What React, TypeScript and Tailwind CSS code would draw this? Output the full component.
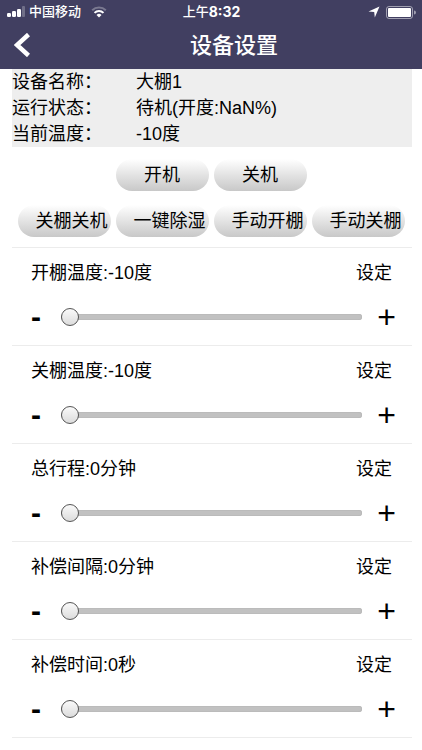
import { useState } from "react";

type Setting = {
    id: string;
    name: string;
    unit: string;
    min: number;
    max: number;
};

const INFO = [
    { label: "设备名称：", value: "大棚1" },
    { label: "运行状态：", value: "待机(开度:NaN%)" },
    { label: "当前温度：", value: "-10度" },
];

const SETTINGS: Setting[] = [
    { id: "open-temp", name: "开棚温度", unit: "度", min: -10, max: 50 },
    { id: "close-temp", name: "关棚温度", unit: "度", min: -10, max: 50 },
    { id: "travel", name: "总行程", unit: "分钟", min: 0, max: 60 },
    { id: "interval", name: "补偿间隔", unit: "分钟", min: 0, max: 60 },
    { id: "duration", name: "补偿时间", unit: "秒", min: 0, max: 60 },
];

const pillCls =
    "h-8 w-[93px] overflow-hidden whitespace-nowrap rounded-full bg-linear-to-b from-white to-[#c8c8c8]";

const rangeCls =
    "h-5 min-w-0 flex-1 appearance-none bg-transparent " +
    "[&::-webkit-slider-runnable-track]:h-1.5 [&::-webkit-slider-runnable-track]:rounded-full [&::-webkit-slider-runnable-track]:bg-[#c1c1c1] [&::-webkit-slider-runnable-track]:shadow-[inset_0_0_1px_#888888] " +
    "[&::-webkit-slider-thumb]:-mt-1.5 [&::-webkit-slider-thumb]:size-[18px] [&::-webkit-slider-thumb]:appearance-none [&::-webkit-slider-thumb]:rounded-full [&::-webkit-slider-thumb]:border [&::-webkit-slider-thumb]:border-[#555555] [&::-webkit-slider-thumb]:bg-linear-to-b [&::-webkit-slider-thumb]:from-[#fafafa] [&::-webkit-slider-thumb]:to-[#dcdcdc]";

function StatusBar() {
    return (
        <div className="grid h-6 grid-cols-3 items-center pr-1.5 pl-[7px] text-[13px] leading-6">
            <div className="flex items-center gap-1">
                <svg className="h-3 w-[18px]" viewBox="0 0 18 12" fill="currentColor" aria-hidden="true">
                    <rect x="0" y="7" width="4" height="4" rx="1.2" />
                    <rect x="5" y="5" width="4" height="6" rx="1.2" />
                    <rect x="10" y="3" width="4" height="8" rx="1.2" />
                    <rect x="15" y="0" width="3" height="11" rx="1" opacity="0.25" />
                </svg>
                <span className="whitespace-nowrap font-medium">中国移动</span>
                <svg className="ml-1.5 h-3 w-4" viewBox="0 0 16 12" fill="none" stroke="currentColor" strokeWidth="2" aria-hidden="true">
                    <path d="M1.2 4.2a9.8 9.8 0 0 1 13.6 0" opacity="0.3" />
                    <path d="M3.5 6.9a6.4 6.4 0 0 1 9 0" />
                    <path d="M5.5 9a3.6 3.6 0 0 1 5 0L8 11.6z" fill="currentColor" stroke="none" />
                </svg>
            </div>
            <div className="flex items-center justify-center whitespace-nowrap">
                <span className="font-medium">上午</span>
                <span className="font-['Inter','Liberation_Sans',sans-serif] text-[14px] font-bold">8:32</span>
            </div>
            <div className="flex items-center justify-end gap-1.5">
                <svg className="size-3" viewBox="0 0 12 12" fill="currentColor" aria-hidden="true">
                    <path d="M11.5 .5 6.8 11.5 6.2 6 .5 5.6z" />
                </svg>
                <svg className="h-[13px] w-[30px]" viewBox="0 0 30 13" aria-hidden="true">
                    <rect x=".5" y=".5" width="26" height="12" rx="2.5" fill="none" stroke="currentColor" opacity="0.5" />
                    <rect x="2" y="2" width="23" height="9" rx="1" fill="currentColor" />
                    <path d="M28 4.5a2 2 0 0 1 0 4z" fill="currentColor" opacity="0.5" />
                </svg>
            </div>
        </div>
    );
}

function SettingRow({ setting }: { setting: Setting }) {
    const { id, name, unit, min, max } = setting;
    const [value, setValue] = useState(min);

    return (
        <section className="border-b border-[#ececec] py-3 pr-4 pl-[19px]">
            <div className="flex justify-between pr-1">
                <label htmlFor={id}>{name}:{value}{unit}</label>
                <button type="button">设定</button>
            </div>
            <div className="mt-[15px] flex h-8 items-center">
                <button
                    type="button"
                    aria-label={`${name}减少`}
                    className="w-[30px] text-left text-[30px] font-bold"
                    onClick={() => setValue(v => Math.max(min, v - 1))}
                >
                    -
                </button>
                <input
                    id={id}
                    type="range"
                    min={min}
                    max={max}
                    value={value}
                    className={rangeCls}
                    onChange={e => setValue(Number(e.target.value))}
                />
                <button
                    type="button"
                    aria-label={`${name}增加`}
                    className="w-[34px] text-right text-[32px]"
                    onClick={() => setValue(v => Math.min(max, v + 1))}
                >
                    +
                </button>
            </div>
        </section>
    );
}

export default function App() {
    return (
        <div className="bg-white font-['Liberation_Sans','Noto_Sans_CJK_SC',sans-serif] text-lg leading-[26px] text-black">
            <header className="bg-[#413f61] text-white">
                <StatusBar />
                <div className="grid h-[45px] grid-cols-[46px_1fr] items-center">
                    <button type="button" aria-label="返回" className="flex h-full items-center pb-1 pl-3.5">
                        <svg className="h-6 w-4" viewBox="0 0 16 24" fill="none" stroke="currentColor" strokeWidth="4.5" aria-hidden="true">
                            <path d="M14.5 1.5 3 12l11.500 10.5" />
                        </svg>
                    </button>
                    <h1 className="pb-0.5 text-center text-[22px] font-medium">设备设置</h1>
                </div>
            </header>

            <main className="mx-3 mr-2.5">
                <dl className="bg-[#eeeeee]">
                    {INFO.map(item => (
                        <div key={item.label} className="flex">
                            <dt className="w-31">{item.label}</dt>
                            <dd>{item.value}</dd>
                        </div>
                    ))}
                </dl>

                <div className="mt-3 flex justify-center gap-[5px] pr-0.5">
                    <button type="button" className={pillCls}>开机</button>
                    <button type="button" className={pillCls}>关机</button>
                </div>
                <div className="mt-3.5 flex justify-center gap-[5px] pr-0.5">
                    {["关棚关机", "一键除湿", "手动开棚", "手动关棚"].map(text => (
                        <button key={text} type="button" className={`${pillCls} pl-[18px] text-left`}>
                            {text}
                        </button>
                    ))}
                </div>

                <div className="mt-2.5 border-t border-[#ececec]">
                    {SETTINGS.map(setting => (
                        <SettingRow key={setting.id} setting={setting} />
                    ))}
                </div>
            </main>
        </div>
    );
}
